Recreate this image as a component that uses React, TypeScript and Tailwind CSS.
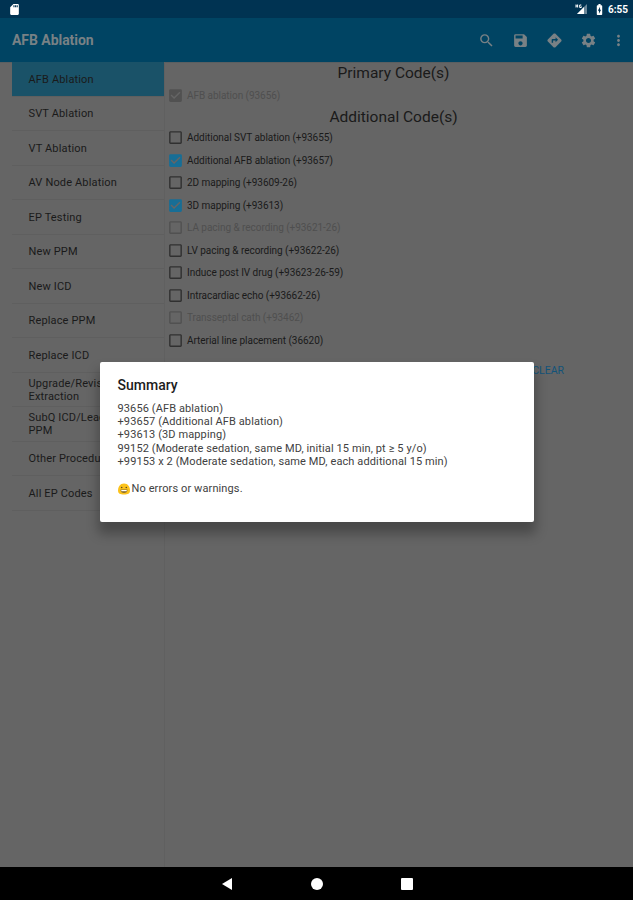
import React from "react";
import clsx from "clsx";
import {
  MdBatteryChargingFull,
  MdCheckBox,
  MdCheckBoxOutlineBlank,
  MdDirections,
  MdMoreVert,
  MdSave,
  MdSdCard,
  MdSearch,
  MdSettings,
} from "react-icons/md";

const procedures = [
  "AFB Ablation",
  "SVT Ablation",
  "VT Ablation",
  "AV Node Ablation",
  "EP Testing",
  "New PPM",
  "New ICD",
  "Replace PPM",
  "Replace ICD",
  "Upgrade/Revision/ Extraction",
  "SubQ ICD/Leadless PPM",
  "Other Procedures",
  "All EP Codes",
];

type Code = { label: string; checked?: boolean; disabled?: boolean };

const additionalCodes: Code[] = [
  { label: "Additional SVT ablation (+93655)" },
  { label: "Additional AFB ablation (+93657)", checked: true },
  { label: "2D mapping (+93609-26)" },
  { label: "3D mapping (+93613)", checked: true },
  { label: "LA pacing & recording (+93621-26)", disabled: true },
  { label: "LV pacing & recording (+93622-26)" },
  { label: "Induce post IV drug (+93623-26-59)" },
  { label: "Intracardiac echo (+93662-26)" },
  { label: "Transseptal cath (+93462)", disabled: true },
  { label: "Arterial line placement (36620)" },
];

const summary = [
  "93656 (AFB ablation)",
  "+93657 (Additional AFB ablation)",
  "+93613 (3D mapping)",
  "99152 (Moderate sedation, same MD, initial 15 min, pt ≥ 5 y/o)",
  "+99153 x 2 (Moderate sedation, same MD, each additional 15 min)",
];

function CodeRow({ label, checked, disabled }: Code) {
  const Icon = checked ? MdCheckBox : MdCheckBoxOutlineBlank;
  return (
    <div
      className={clsx(
        "flex h-[22.5px] items-center gap-[3px] pl-px text-[10px] tracking-[-0.04px]",
        disabled ? "text-[#4f4f4f]" : "text-[#1a1a1a]"
      )}
    >
      <Icon
        className={clsx(
          "size-[17px] shrink-0",
          disabled ? "text-[#515151]" : checked ? "text-[#176e96]" : "text-[#303030]"
        )}
      />
      <span className="whitespace-nowrap">{label}</span>
    </div>
  );
}

function StatusBar() {
  return (
    <div className="flex h-[18px] items-center bg-[#003352] pr-[5px] pl-2 text-white">
      <MdSdCard className="size-[13px]" />
      <svg viewBox="0 0 13 12" className="ml-auto h-3 w-[13px]">
        <path d="M12 1v10H2z" fill="#6b8799" />
        <path d="M9 4v7H2z" fill="#fff" />
        <path d="M1 1.5v3M2.6 1.5v3M1 3h2M4.7 2h1.6M4.7 2v2.5h1.6V3.4" stroke="#fff" fill="none" />
      </svg>
      <MdBatteryChargingFull className="ml-[5px] size-[13px]" />
      <span className="ml-[2px] text-[10px] font-bold">6:55</span>
    </div>
  );
}

function Toolbar() {
  return (
    <div className="flex h-11 items-center bg-[#004463] pl-3 text-[#788185]">
      <h1 className="pt-px text-[14px] font-bold tracking-[-0.05px]">AFB Ablation</h1>
      <div className="ml-auto flex items-center gap-[17px] pr-[10px]">
        <MdSearch className="size-[17px]" />
        <MdSave className="size-[17px]" />
        <MdDirections className="size-[17px]" />
        <MdSettings className="size-[17px]" />
        <MdMoreVert className="-mx-[4px] size-[17px]" />
      </div>
    </div>
  );
}

function SummaryDialog() {
  return (
    <div className="absolute top-[362px] left-[100px] h-[160px] w-[434px] rounded-[2px] bg-white pt-[15px] pl-[17.5px] text-[#414141] shadow-[0_10px_12px_2px_rgba(0,0,0,0.28)]">
      <h2 className="text-[14px] leading-[17px] font-medium text-[#1c1c1c]">Summary</h2>
      <div className="mt-[7.5px] text-[11px] leading-[13.4px] tracking-[0.11px] whitespace-nowrap">
        {summary.map((line) => (
          <p key={line}>{line}</p>
        ))}
        <p className="mt-[13.4px] flex items-center">
          <svg viewBox="0 0 14 14" className="mr-px -ml-px size-[14px]">
            <path d="M7 1.5c4 0 6 3.6 6 7 0 3-2 4-6 4s-6-1-6-4c0-3.400 2-7 6-7z" fill="#fcc21b" />
            <path d="M3.500 7.500h7c0 2.500-1.500 3.500-3.500 3.500S3.500 10 3.500 7.500z" fill="#8a6d2a" />
            <path d="M4.300 8h5.400v1.200H4.300z" fill="#fff" />
            <circle cx="4.700" cy="5.500" r=".8" fill="#5c481d" />
            <circle cx="9.300" cy="5.500" r=".8" fill="#5c481d" />
          </svg>
          No errors or warnings.
        </p>
      </div>
    </div>
  );
}

export default function App() {
  return (
    <div className="relative flex h-[900px] w-[633px] flex-col overflow-hidden bg-[#656565] font-[Roboto,sans-serif]">
      <StatusBar />
      <Toolbar />

      <main className="flex min-h-0 flex-1 border-t border-[#5a5f61]">
        {/* Procedure list */}
        <nav className="-mt-px w-[165px] border-r border-[#606060] pl-3">
          {procedures.map((name, i) => (
            <div
              key={name}
              className={clsx(
                "flex h-[34.5px] items-center border-b border-[#5f5f5f] pt-px pl-[16.5px] text-[11px] leading-[13px] tracking-[0.15px] text-[#1a1a1a]",
                i === 0 && "bg-[#1a5268]"
              )}
            >
              <span className="w-[105px]">{name}</span>
            </div>
          ))}
        </nav>

        {/* Codes for the selected procedure */}
        <section className="flex-1 pl-[1px]">
          <h2 className="pr-3 text-center text-[15.5px] leading-[21px] text-[#1a1a1a]">
            Primary Code(s)
          </h2>
          <CodeRow label="AFB ablation (93656)" checked disabled />
          <h2 className="pr-3 text-center text-[15.5px] leading-[20px] text-[#1a1a1a]">
            Additional Code(s)
          </h2>
          {additionalCodes.map((code) => (
            <CodeRow key={code.label} {...code} />
          ))}
          <div className="flex h-[39px] items-center justify-between pr-[69px] pl-[46px] text-[10.500px] text-[#12537a]">
            <span>SUMMARIZE</span>
            <span>SEDATION</span>
            <span>CLEAR</span>
          </div>
        </section>
      </main>

      {/* Android navigation keys */}
      <footer className="flex h-[33px] items-center justify-center gap-[78px] bg-black text-white">
        <svg viewBox="0 0 12 12" className="size-3" fill="currentColor">
          <path d="M11 0v12L1 6z" />
        </svg>
        <span className="size-3 rounded-full bg-white" />
        <span className="size-3 rounded-[1px] bg-white" />
      </footer>

      <SummaryDialog />
    </div>
  );
}
